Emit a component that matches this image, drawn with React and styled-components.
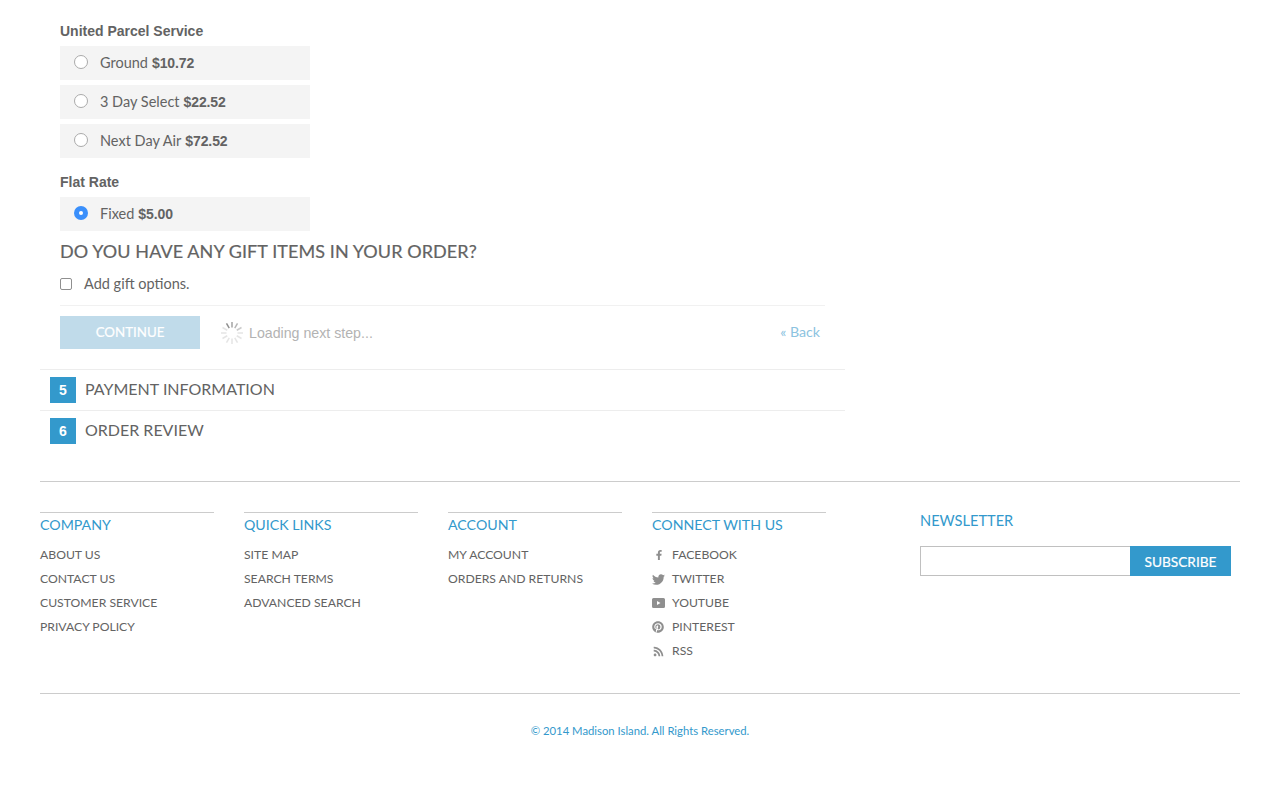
import React from 'react';
import styled, { createGlobalStyle } from 'styled-components';
import { FaFacebookF, FaTwitter, FaPinterest, FaRss } from 'react-icons/fa';

const GlobalStyle = createGlobalStyle`
  html, body {
    margin: 0;
    padding: 0;
    background: #fff;
  }
  body {
    font-family: Lato, "Liberation Sans", sans-serif;
    color: #636363;
  }
  * {
    box-sizing: border-box;
  }
`;

const Page = styled.div`
  width: 1280px;
  height: 800px;
  padding: 0 40px;
  overflow: hidden;
`;

const Checkout = styled.section`
  width: 805px;
`;

const StepBody = styled.div`
  padding: 22px 20px 20px;
`;

const MethodTitle = styled.div`
  font-family: "Liberation Sans", Arial, sans-serif;
  font-size: 14px;
  font-weight: 700;
  line-height: 18px;
  height: 18px;
  margin: ${(p) => p.$top || 0}px 0 6px;
  color: #636363;
`;

const MethodList = styled.div`
  display: flex;
  flex-direction: column;
  gap: 5px;
  width: 250px;
`;

const MethodRow = styled.div`
  display: flex;
  align-items: center;
  height: 34px;
  padding: 0 0 1px 14px;
  background: #f4f4f4;
  font-size: 14.5px;
`;

const Radio = styled.span`
  width: 14px;
  height: 14px;
  margin: -2px 12px 0 0;
  border-radius: 50%;
  flex: none;
  display: flex;
  align-items: center;
  justify-content: center;
  background: ${(p) => (p.$checked ? '#3a8ffb' : '#fff')};
  border: ${(p) => (p.$checked ? 'none' : '1px solid #aaa')};
  &::after {
    content: '';
    display: ${(p) => (p.$checked ? 'block' : 'none')};
    width: 4px;
    height: 4px;
    border-radius: 50%;
    background: #fff;
  }
`;

const Price = styled.strong`
  font-family: "Liberation Sans", Arial, sans-serif;
  font-size: 14px;
  font-weight: 700;
  letter-spacing: -0.1px;
  margin-left: 4px;
`;

const GiftTitle = styled.h2`
  margin: 10px 0 0;
  font-size: 18px;
  font-weight: 400;
  line-height: 20px;
  letter-spacing: 0.08px;
  color: #636363;
  -webkit-text-stroke: 0.2px #636363;
`;

const GiftRow = styled.label`
  display: flex;
  align-items: center;
  height: 20px;
  margin-top: 13px;
  padding-bottom: 1px;
  font-size: 14.5px;
`;

const Checkbox = styled.span`
  width: 12px;
  height: 12px;
  margin: 1px 12px 0 0;
  border: 1px solid #8f8f8f;
  border-radius: 2px;
  background: #fff;
  flex: none;
`;

const Buttons = styled.div`
  display: flex;
  align-items: center;
  margin-top: 11px;
  padding-top: 10px;
  border-top: 1px solid #f1f1f1;
`;

const ContinueButton = styled.button`
  width: 140px;
  height: 33px;
  border: 0;
  padding: 0 0 1px;
  background: #c0dbea;
  color: #fff;
  font: 400 13.3px Lato, sans-serif;
  -webkit-text-stroke: 0.2px #fff;
`;

const Spinner = styled.svg`
  width: 24px;
  height: 24px;
  margin-left: 20px;
  flex: none;
`;

const LoadingText = styled.span`
  margin-left: 5px;
  font-family: "Liberation Sans", Arial, sans-serif;
  font-size: 14.2px;
  color: #b3b3b3;
`;

const BackLink = styled.a`
  margin-left: auto;
  margin-right: 5px;
  padding-bottom: 2px;
  font-size: 14.2px;
  color: #8cc3e0;
`;

const StepRow = styled.div`
  display: flex;
  align-items: center;
  height: 41px;
  padding-left: 10px;
  border-top: 1px solid #ededed;
`;

const StepNumber = styled.span`
  width: 26px;
  height: 26px;
  margin-right: 9px;
  display: flex;
  align-items: center;
  justify-content: center;
  background: #3399cc;
  color: #fff;
  font: 700 14px "Liberation Sans", Arial, sans-serif;
`;

const StepTitle = styled.span`
  padding-bottom: 4px;
  font-size: 16px;
  color: #636363;
`;

const Footer = styled.footer`
  margin-top: 30px;
  border-top: 1px solid #cccccc;
`;

const FooterMain = styled.div`
  display: flex;
  height: 212px;
  border-bottom: 1px solid #cccccc;
`;

const LinkColumns = styled.div`
  display: grid;
  grid-template-columns: repeat(4, 174px);
  gap: 30px;
  padding-top: 30px;
`;

const LinkColumn = styled.div`
  border-top: 1px solid #cccccc;
`;

const ColumnTitle = styled.h6`
  margin: 0;
  padding-top: 2px;
  font-size: 14.2px;
  font-weight: 400;
  line-height: 20px;
  color: #3399cc;
`;

const LinkList = styled.ul`
  list-style: none;
  margin: 8px 0 0;
  padding: 0;
`;

const LinkItem = styled.li`
  display: flex;
  align-items: center;
  height: 24px;
  padding-bottom: 2px;
  font-size: 12.2px;
  color: #636363;
`;

const SocialIcon = styled.span`
  width: 20px;
  height: 14px;
  margin-top: 2px;
  flex: none;
  display: flex;
  align-items: center;
  color: #8f8f8f;
  font-size: ${(p) => p.$size || 12}px;
  padding-left: ${(p) => p.$inset || 0}px;
`;

const Newsletter = styled.div`
  margin-left: 94px;
  padding-top: 29px;
`;

const NewsletterTitle = styled.div`
  font-size: 14.6px;
  line-height: 20px;
  color: #3399cc;
`;

const NewsletterForm = styled.div`
  display: flex;
  margin-top: 15px;
`;

const EmailInput = styled.input`
  width: 210px;
  height: 30px;
  border: 1px solid #c0c0c0;
  border-right: 0;
  padding: 0 8px;
  background: #fff;
  outline: none;
`;

const SubscribeButton = styled.button`
  width: 101px;
  height: 30px;
  border: 0;
  padding: 0;
  background: #3399cc;
  color: #fff;
  font: 400 13.7px Lato, sans-serif;
  -webkit-text-stroke: 0.2px #fff;
`;

const Copyright = styled.div`
  margin-top: 29px;
  text-align: center;
  font-size: 11.3px;
  line-height: 16px;
  color: #3399cc;
`;

function YoutubeIcon() {
  return (
    <svg width="13" height="10" viewBox="0 0 13 10" fill="currentColor">
      <path d="M1.5 0h10A1.5 1.5 0 0 1 13 1.5v7a1.5 1.5 0 0 1-1.5 1.5h-10A1.5 1.5 0 0 1 0 8.500v-7A1.500 1.500 0 0 1 1.500 0zM5 3v4l3.500-2z" fillRule="evenodd" />
    </svg>
  );
}

const methods = [
  { title: 'United Parcel Service', top: 0, rows: [['Ground', '$10.72'], ['3 Day Select', '$22.52'], ['Next Day Air', '$72.52']] },
  { title: 'Flat Rate', top: 15, rows: [['Fixed', '$5.00', true]] },
];

const columns = [
  { title: 'COMPANY', links: ['ABOUT US', 'CONTACT US', 'CUSTOMER SERVICE', 'PRIVACY POLICY'] },
  { title: 'QUICK LINKS', links: ['SITE MAP', 'SEARCH TERMS', 'ADVANCED SEARCH'] },
  { title: 'ACCOUNT', links: ['MY ACCOUNT', 'ORDERS AND RETURNS'] },
];

const social = [
  { name: 'FACEBOOK', Icon: FaFacebookF, inset: 2, size: 10 },
  { name: 'TWITTER', Icon: FaTwitter, size: 13 },
  { name: 'YOUTUBE', Icon: YoutubeIcon },
  { name: 'PINTEREST', Icon: FaPinterest, inset: 0, size: 12 },
  { name: 'RSS', Icon: FaRss, inset: 1, size: 11 },
];

const spokes = Array.from({ length: 12 }, (_, i) => i);

function LoadingSpinner() {
  return (
    <Spinner viewBox="0 0 24 24">
      {spokes.map((i) => (
        <line
          key={i}
          x1="12"
          y1="1"
          x2="12"
          y2="6.500"
          stroke="#8a8a8a"
          strokeWidth="1.500"
          opacity={i < 4 ? 0.95 - i * 0.17 : 0.22}
          transform={`rotate(${i * 30 - 30} 12 12)`}
        />
      ))}
    </Spinner>
  );
}

export default function App() {
  return (
    <Page>
      <GlobalStyle />
      <Checkout>
        <StepBody>
          {methods.map((group) => (
            <div key={group.title}>
              <MethodTitle $top={group.top}>{group.title}</MethodTitle>
              <MethodList>
                {group.rows.map(([name, price, checked]) => (
                  <MethodRow key={name}>
                    <Radio $checked={checked} />
                    {name}
                    <Price>{price}</Price>
                  </MethodRow>
                ))}
              </MethodList>
            </div>
          ))}
          <GiftTitle>DO YOU HAVE ANY GIFT ITEMS IN YOUR ORDER?</GiftTitle>
          <GiftRow>
            <Checkbox />
            Add gift options.
          </GiftRow>
          <Buttons>
            <ContinueButton>CONTINUE</ContinueButton>
            <LoadingSpinner />
            <LoadingText>Loading next step...</LoadingText>
            <BackLink>« Back</BackLink>
          </Buttons>
        </StepBody>
        <StepRow>
          <StepNumber>5</StepNumber>
          <StepTitle>PAYMENT INFORMATION</StepTitle>
        </StepRow>
        <StepRow>
          <StepNumber>6</StepNumber>
          <StepTitle>ORDER REVIEW</StepTitle>
        </StepRow>
      </Checkout>
      <Footer>
        <FooterMain>
          <LinkColumns>
            {columns.map((col) => (
              <LinkColumn key={col.title}>
                <ColumnTitle>{col.title}</ColumnTitle>
                <LinkList>
                  {col.links.map((link) => (
                    <LinkItem key={link}>{link}</LinkItem>
                  ))}
                </LinkList>
              </LinkColumn>
            ))}
            <LinkColumn>
              <ColumnTitle>CONNECT WITH US</ColumnTitle>
              <LinkList>
                {social.map(({ name, Icon, inset, size }) => (
                  <LinkItem key={name}>
                    <SocialIcon $inset={inset} $size={size}>
                      <Icon />
                    </SocialIcon>
                    {name}
                  </LinkItem>
                ))}
              </LinkList>
            </LinkColumn>
          </LinkColumns>
          <Newsletter>
            <NewsletterTitle>NEWSLETTER</NewsletterTitle>
            <NewsletterForm>
              <EmailInput />
              <SubscribeButton>SUBSCRIBE</SubscribeButton>
            </NewsletterForm>
          </Newsletter>
        </FooterMain>
        <Copyright>© 2014 Madison Island. All Rights Reserved.</Copyright>
      </Footer>
    </Page>
  );
}
